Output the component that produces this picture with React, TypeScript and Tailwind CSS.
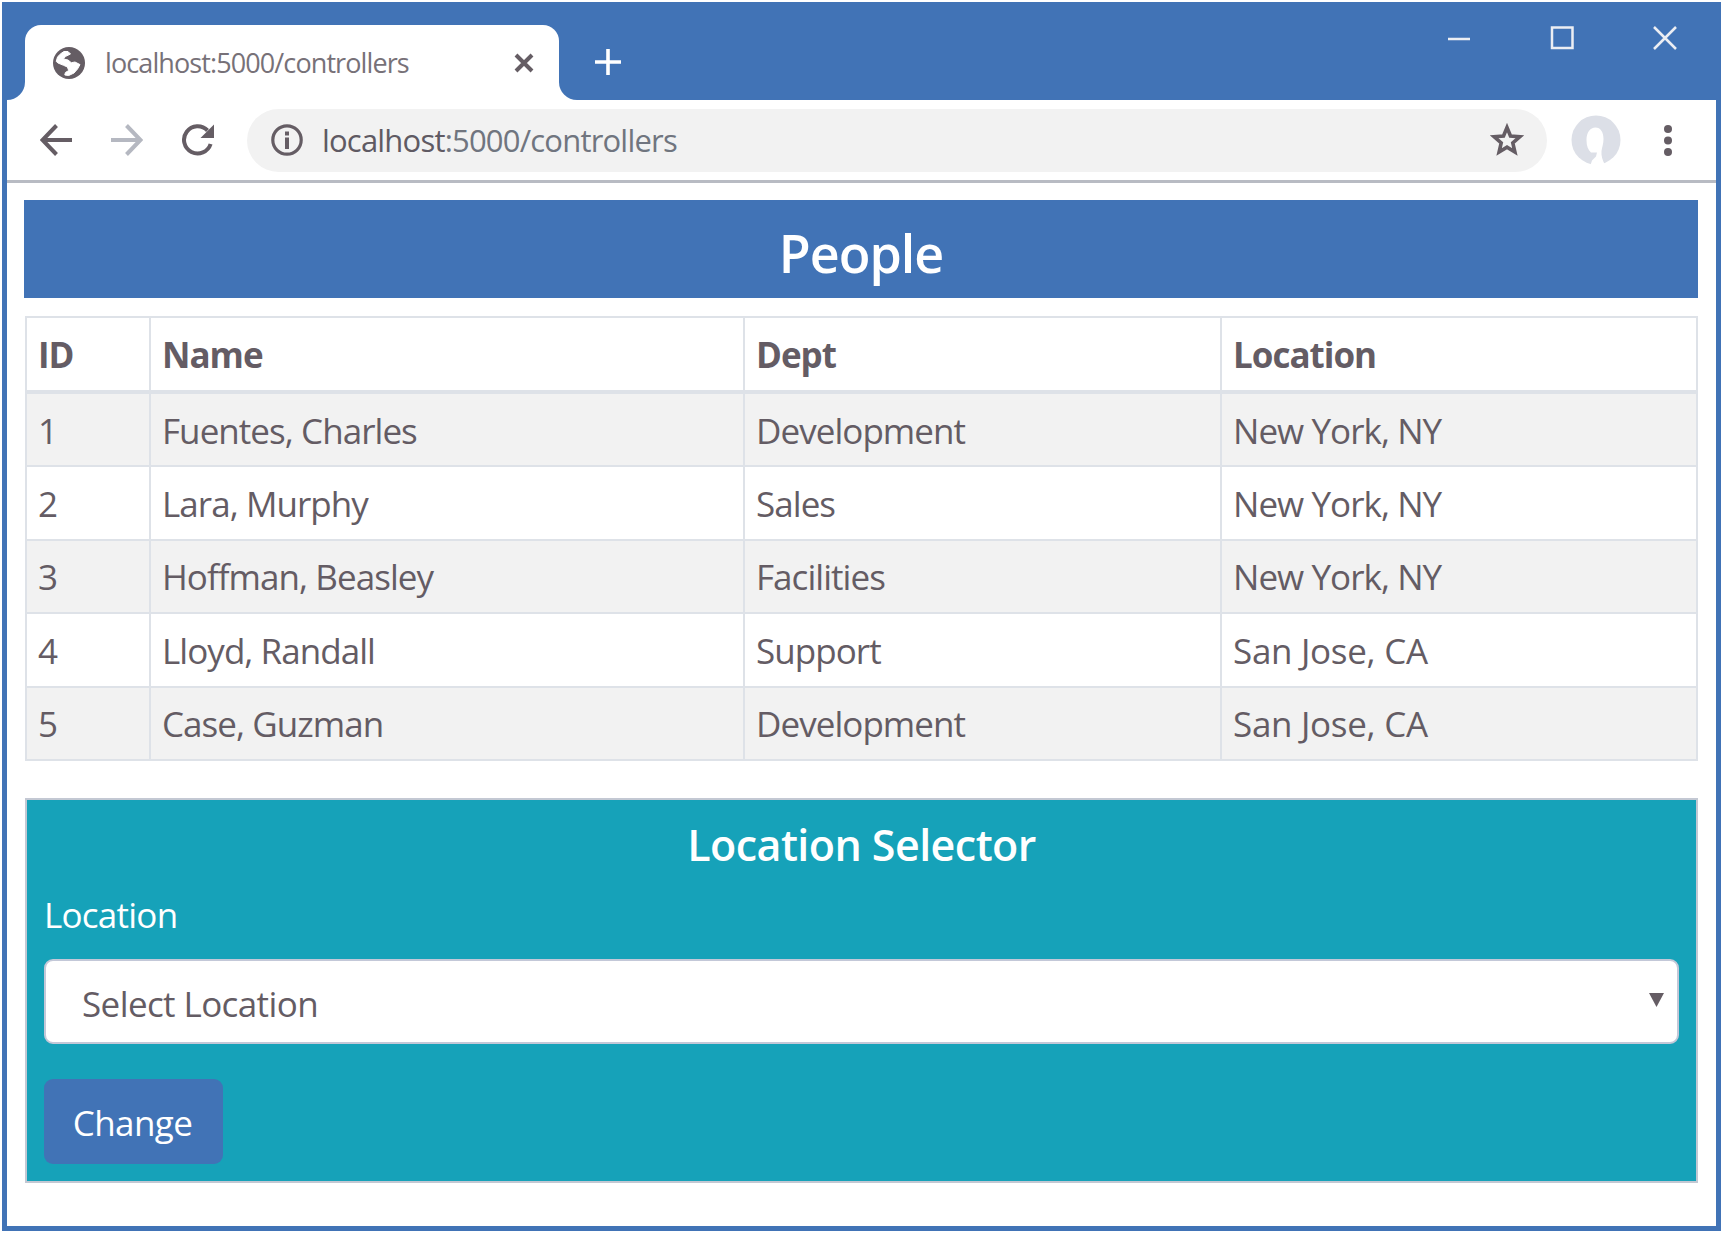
import React from "react";

const people = [
  ["1", "Fuentes, Charles", "Development", "New York, NY"],
  ["2", "Lara, Murphy", "Sales", "New York, NY"],
  ["3", "Hoffman, Beasley", "Facilities", "New York, NY"],
  ["4", "Lloyd, Randall", "Support", "San Jose, CA"],
  ["5", "Case, Guzman", "Development", "San Jose, CA"],
];

function Globe() {
  return (
    <svg className="h-8 w-8 shrink-0" viewBox="0 0 32 32">
      <circle cx="16" cy="16" r="16" fill="#655d64" />
      <path
        d="M11 4.500 15 4.500 17.500 7 12.400 9.500 10.500 12 15 13 18.300 15.700 22 15 27 17.600 24.500 22 21 26 15.700 28.500 11.800 28 12.400 25.500 15.700 23.500 14.400 20 10.500 18.300 5 16 3.200 14.400 4.600 9.800 8 6.500Z"
        fill="#fff"
        stroke="#fff"
        strokeLinejoin="round"
      />
    </svg>
  );
}

function TitleBar() {
  return (
    <div className="flex h-[98px] shrink-0 items-end bg-[#4173b6]">
      <div className="h-[18px] w-[18px] shrink-0 bg-white">
        <div className="h-full w-full rounded-br-[18px] bg-[#4173b6]" />
      </div>
      <div className="flex h-[75px] w-[534px] shrink-0 items-center rounded-t-[16px] bg-white pl-[28px] pr-[25px]">
        <Globe />
        <span className="ml-[20px] whitespace-nowrap text-[27px] leading-none tracking-[-0.9px] text-[#777178]">
          localhost:5000/controllers
        </span>
        <svg className="ml-auto h-5 w-5" viewBox="0 0 20 20">
          <path d="M2 2 18 18M18 2 2 18" stroke="#655d64" strokeWidth="4" />
        </svg>
      </div>
      <div className="h-[18px] w-[18px] shrink-0 bg-white">
        <div className="h-full w-full rounded-bl-[18px] bg-[#4173b6]" />
      </div>
      <svg className="mb-[24px] ml-[17px] h-[28px] w-[28px]" viewBox="0 0 28 28">
        <path d="M14 1v26M1 14h26" stroke="#fff" strokeWidth="3.600" />
      </svg>
      <div className="mb-[49px] ml-auto mr-[38px] flex items-center gap-[77px]">
        <svg className="h-[26px] w-[26px]" viewBox="0 0 26 26">
          <path d="M2 14h22" stroke="#eceef3" strokeWidth="2.500" />
        </svg>
        <svg className="h-[26px] w-[26px]" viewBox="0 0 26 26">
          <rect x="3" y="2.500" width="20.500" height="20.500" fill="none" stroke="#eceef3" strokeWidth="2.500" />
        </svg>
        <svg className="h-[26px] w-[26px]" viewBox="0 0 26 26">
          <path d="M2 2 24 24M24 2 2 24" stroke="#eceef3" strokeWidth="2.500" />
        </svg>
      </div>
    </div>
  );
}

function Toolbar() {
  return (
    <div className="flex h-[83px] shrink-0 items-center border-b-[3px] border-[#b8bbc3] bg-white pl-[33px]">
      <svg className="h-8 w-8" viewBox="0 0 32 32">
        <path d="M32 16H3M16.500 1.500 2.500 16l14 14.500" fill="none" stroke="#655d64" strokeWidth="4" />
      </svg>
      <svg className="ml-[39px] h-8 w-8" viewBox="0 0 32 32">
        <path d="M0 16h29M15.500 1.500 29.500 16l-14 14.500" fill="none" stroke="#b5b8c1" strokeWidth="4" />
      </svg>
      <svg className="ml-[39px] h-8 w-8" viewBox="0 0 32 32">
        <path d="M28.600 20A13.600 13.600 0 1 1 25.500 6.500" fill="none" stroke="#655d64" strokeWidth="4" />
        <path d="M32 .5V14H18.500Z" fill="#655d64" />
      </svg>
      <div className="ml-[33px] flex h-[63px] w-[1300px] items-center rounded-full bg-[#f2f2f2] pl-[24px] pr-[23px]">
        <svg className="h-8 w-8 shrink-0" viewBox="0 0 32 32">
          <circle cx="16" cy="16" r="14.200" fill="none" stroke="#655d64" strokeWidth="3.200" />
          <path d="M16 13.500V25M16 7.500v4" stroke="#655d64" strokeWidth="4" />
        </svg>
        <span className="ml-[19px] mt-[1px] whitespace-nowrap text-[31px] leading-none tracking-[-0.8px] text-[#70757f]">
          <span className="text-[#5f5a63]">localhost</span>:5000/controllers
        </span>
        <svg className="ml-auto h-[34px] w-[34px]" viewBox="0 0 34 34">
          <path
            d="M17 4.500l3.500 8.500 9.300.8-7 6.100 2.100 9.100-7.900-4.900L9.100 29l2.100-9.100-7-6.100 9.300-.8Z"
            fill="none"
            stroke="#655d64"
            strokeWidth="3.600"
          />
        </svg>
      </div>
      <svg className="ml-[24px] h-[50px] w-[50px]" viewBox="0 0 50 50">
        <circle cx="25" cy="25" r="24.500" fill="#dcdfe7" />
        <path
          d="M24.500 12.500c-5.500 0-9 5-9 12.500 0 6 1.500 10 4.500 12.500h6l-1 4-4 4-1.500 4.500H34c-2.500-5-4-9-3.500-14 .5-4 2-7 2-12 0-7-3-11.500-8-11.500Z"
          fill="#fff"
        />
      </svg>
      <svg className="ml-[43px] h-8 w-2" viewBox="0 0 8 32">
        <circle cx="4" cy="5" r="4" fill="#655d64" />
        <circle cx="4" cy="16.500" r="4" fill="#655d64" />
        <circle cx="4" cy="28" r="4" fill="#655d64" />
      </svg>
    </div>
  );
}

function PeopleTable() {
  return (
    <table className="ml-[1px] mt-[18px] w-[1673px] table-fixed border-separate border-spacing-0 border-l-2 border-t-2 border-[#dee2e8] text-left text-[35px] leading-[48px] text-[#645c64]">
      <colgroup>
        <col className="w-[124px]" />
        <col className="w-[594px]" />
        <col className="w-[477px]" />
        <col className="w-[476px]" />
      </colgroup>
      <thead>
        <tr className="h-[76px]">
          {["ID", "Name", "Dept", "Location"].map((h) => (
            <th key={h} className="border-b-4 border-r-2 border-[#dee2e8] px-[11px] pb-0 pt-[2px] font-bold tracking-[-1px]">
              {h}
            </th>
          ))}
        </tr>
      </thead>
      <tbody>
        {people.map((row) => (
          <tr key={row[0]} className="h-[73.4px] odd:bg-[#f2f2f2]">
            {row.map((c, i) => (
              <td
                key={i}
                className={
                  c.startsWith("San")
                    ? "border-b-2 border-r-2 border-[#dee2e8] px-[11px] pb-0 pt-[2px] tracking-[-0.3px]"
                    : "border-b-2 border-r-2 border-[#dee2e8] px-[11px] pb-0 pt-[2px] tracking-[-0.95px]"
                }
              >
                {c}
              </td>
            ))}
          </tr>
        ))}
      </tbody>
    </table>
  );
}

function LocationSelector() {
  return (
    <div className="ml-[1px] mt-[37px] flex h-[385px] w-[1673px] flex-col items-start border-2 border-[#c3c8d3] bg-[#16a2b9] px-[17px] text-white">
      <h4 className="mt-[15px] self-center text-[43px] font-semibold leading-[60px] tracking-[-0.55px]">
        Location Selector
      </h4>
      <label className="mt-[16px] text-[35px] leading-[48px] tracking-[-0.75px]">Location</label>
      <div className="mt-[20px] flex h-[85px] w-[1635px] items-center justify-between rounded-[9px] border-2 border-[#c3c8d8] bg-white pl-[36px] pr-[13px] text-[35px] tracking-[-0.6px] text-[#645c64]">
        <span className="mt-[5px] leading-none">Select Location</span>
        <svg className="mb-[2px] h-[14px] w-[15px]" viewBox="0 0 15 14">
          <path d="M0 0h15L7.500 14Z" fill="#655d64" />
        </svg>
      </div>
      <button className="mt-[35px] flex h-[85px] w-[179px] items-center justify-center rounded-[9px] bg-[#4173b6] pr-[2px] pt-[2px] text-[35px] leading-none tracking-[-0.6px] text-white">
        Change
      </button>
    </div>
  );
}

export default function App() {
  return (
    <div className="h-[1235px] w-[1725px] overflow-hidden bg-white pl-[2px] pt-[2px] font-['Open_Sans','Noto_Sans',sans-serif] font-[450]">
      <div className="flex h-[1229px] w-[1719px] flex-col border-x-[5px] border-b-[5px] border-[#4173b6] bg-white">
        <TitleBar />
        <Toolbar />
        <main className="pl-[17px] pt-[17px]">
          <h1 className="flex h-[98px] w-[1674px] items-center justify-center bg-[#4173b6] pt-[7px] text-[52px] font-semibold leading-none tracking-[-1px] text-white">
            People
          </h1>
          <PeopleTable />
          <LocationSelector />
        </main>
      </div>
    </div>
  );
}
